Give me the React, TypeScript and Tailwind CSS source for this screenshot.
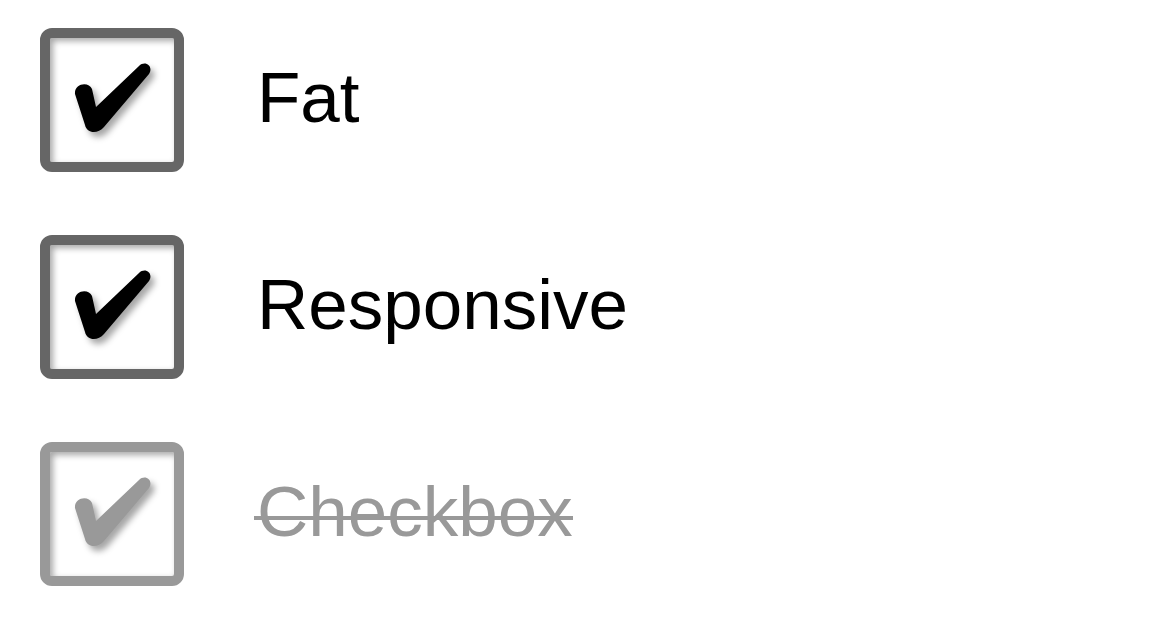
import React from 'react';

type Item = { label: string; disabled?: boolean };

const items: Item[] = [
  { label: 'Fat' },
  { label: 'Responsive' },
  { label: 'Checkbox', disabled: true },
];

function Check({ color }: { color: string }) {
  return (
    <svg width="144" height="144" viewBox="0 0 144 144" className="absolute -left-[10px] -top-[10px] drop-shadow-[4px_5px_3px_rgba(0,0,0,0.35)]">
      <path
        d="M35 66 C34 55 49 53 52 61 L56 79 L99 38 C105 32 114 38 109 46 L64 99 C58 106 47 106 45 97 Z"
        fill={color}
      />
    </svg>
  );
}

export default function App() {
  return (
    <div className="min-h-screen bg-white pl-10 pt-7 flex flex-col gap-[63px]" style={{ fontFamily: '"Liberation Sans", Arial, sans-serif' }}>
      {items.map(item => (
        <label key={item.label} className="flex items-center gap-[73px]">
          <div
            className={`relative w-[144px] h-[144px] shrink-0 rounded-[12px] border-[10px] bg-white shadow-[inset_3px_3px_6px_rgba(0,0,0,0.35)] ${item.disabled ? 'border-[#999999]' : 'border-[#666666]'}`}
          >
            <Check color={item.disabled ? '#999999' : '#000000'} />
          </div>
          <span
            className={`relative pb-[6px] text-[71px] leading-none ${item.disabled ? 'text-[#999999] after:absolute after:-left-[3px] after:right-0 after:top-[40px] after:h-[4px] after:bg-[#999999] after:content-[""]' : 'text-black'}`}
          >
            {item.label}
          </span>
        </label>
      ))}
    </div>
  );
}
